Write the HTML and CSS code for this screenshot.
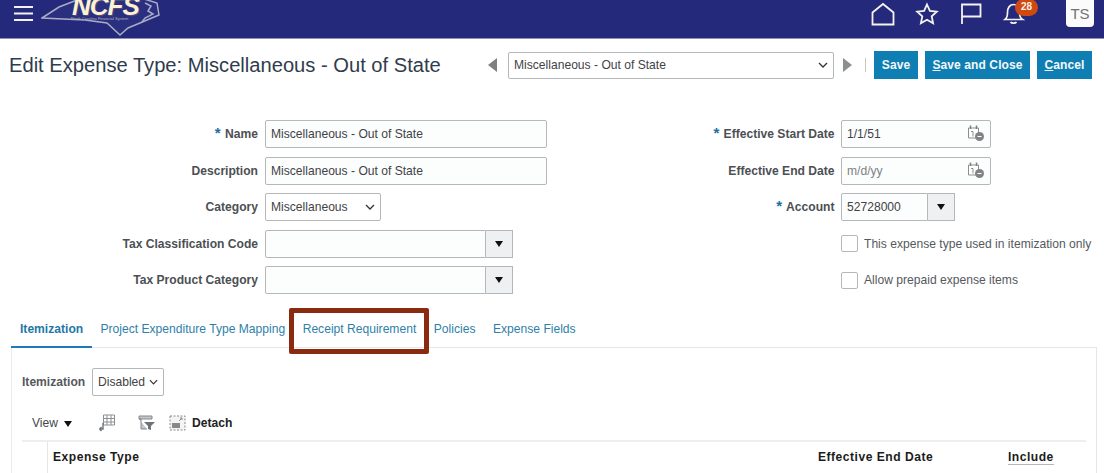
FILE: index.html
```html
<!DOCTYPE html>
<html lang="en">
<head>
<meta charset="utf-8">
<title>Edit Expense Type</title>
<link rel="stylesheet" href="styles.css">
</head>
<body>
<header class="topbar">
  <div class="brand">
    <svg class="burger" width="20" height="16" viewBox="0 0 20 16"><path d="M0 2h19M0 8.500h19M0 15h19" stroke="#f3f1ee" stroke-width="2"/></svg>
    <div class="logo">
      <svg class="map" width="122" height="38" viewBox="0 0 122 38"><path d="M1 18 L18 7 L36 0 L46 -2 L100 -2 L116 3 L118 15 L99 23 L87 28 L79 35 L66 23 L44 20 Z" fill="#2a2f80" stroke="#a9abc6" stroke-width="1.500"/><path d="M104 3l6 3-3 5 5 3-8 4-3 4" fill="none" stroke="#a9abc6" stroke-width="1.500"/></svg>
      <span class="logo-name">NCFS</span>
      <span class="logo-sub">North Carolina Financial System</span>
    </div>
  </div>
  <nav class="top-icons">
    <svg width="24" height="24" viewBox="0 0 24 24"><path d="M1.500 10.500 L12 2 L22.500 10.500 V22.500 H1.500 Z" fill="none" stroke="#f5f3ef" stroke-width="1.800"/></svg>
    <svg width="24" height="24" viewBox="0 0 24 24"><path d="M12 2.500l2.900 6.400 6.900.8-5.100 4.700 1.400 6.900-6.100-3.500-6.100 3.500 1.400-6.900-5.100-4.700 6.900-.8z" fill="none" stroke="#f5f3ef" stroke-width="1.800"/></svg>
    <svg width="24" height="24" viewBox="0 0 24 24"><path d="M3 23V3.500H21.500V15.500H3" fill="none" stroke="#f5f3ef" stroke-width="1.800"/></svg>
    <div class="bell">
      <svg width="22" height="24" viewBox="0 0 22 24"><path d="M2 18.500c2-1.500 2.500-3.500 2.500-7C4.500 6.500 7 3.500 10.500 3.500S16.500 6.500 16.500 11.500c0 3.500 .5 5.500 3 7zM7.500 21c1 1.500 5 1.500 6 0" fill="none" stroke="#f5f3ef" stroke-width="1.700"/></svg>
      <span class="badge">28</span>
    </div>
    <div class="avatar">TS</div>
  </nav>
</header>

<div class="title-row">
  <h1 class="page-title">Edit Expense Type: Miscellaneous - Out of State</h1>
  <div class="title-actions">
    <svg class="arrow" width="9" height="14" viewBox="0 0 9 14"><path d="M9 0V14L0 7Z" fill="#7d8184"/></svg>
    <div class="select nav-select"><span>Miscellaneous - Out of State</span><svg class="chev" width="10" height="6" viewBox="0 0 10 6"><path d="M1 1l4 4 4-4" fill="none" stroke="#333" stroke-width="1.300"/></svg></div>
    <svg class="arrow" width="9" height="14" viewBox="0 0 9 14"><path d="M0 0V14L9 7Z" fill="#8b8f91"/></svg>
    <span class="sep"></span>
    <div class="buttons">
      <button class="btn btn-save">Save</button>
      <button class="btn btn-close"><u>S</u>ave and Close</button>
      <button class="btn btn-cancel"><u>C</u>ancel</button>
    </div>
  </div>
</div>

<main class="form">
  <section class="col col-left">
    <label class="label"><i>*</i> Name</label>
    <input class="input w-282" value="Miscellaneous - Out of State">
    <label class="label">Description</label>
    <input class="input w-282" value="Miscellaneous - Out of State">
    <label class="label">Category</label>
    <div class="select cat-select"><span>Miscellaneous</span><svg class="chev" width="10" height="6" viewBox="0 0 10 6"><path d="M1 1l4 4 4-4" fill="none" stroke="#333" stroke-width="1.300"/></svg></div>
    <label class="label">Tax Classification Code</label>
    <div class="combo w-248"><input class="input"><span class="drop"><b></b></span></div>
    <label class="label">Tax Product Category</label>
    <div class="combo w-248"><input class="input"><span class="drop"><b></b></span></div>
  </section>
  <section class="col col-right">
    <label class="label"><i>*</i> Effective Start Date</label>
    <div class="date"><input class="input" value="1/1/51"><svg class="cal" width="18" height="17" viewBox="0 0 18 17"><path d="M1.500 3h10v10h-10z" fill="#fff" stroke="#8c8f91"/><path d="M3.500 .5v3.500M9.500 .5v3.500" stroke="#7d8184" stroke-width="1.500"/><path d="M4 6.500h2v5" fill="none" stroke="#8c8f91"/><circle cx="12.500" cy="11.500" r="4.500" fill="#7f8487"/><path d="M10.500 11.500h4" stroke="#fff"/></svg></div>
    <label class="label">Effective End Date</label>
    <div class="date"><input class="input" placeholder="m/d/yy"><svg class="cal" width="18" height="17" viewBox="0 0 18 17"><path d="M1.500 3h10v10h-10z" fill="#fff" stroke="#8c8f91"/><path d="M3.500 .5v3.500M9.500 .5v3.500" stroke="#7d8184" stroke-width="1.500"/><path d="M4 6.500h2v5" fill="none" stroke="#8c8f91"/><circle cx="12.500" cy="11.500" r="4.500" fill="#7f8487"/><path d="M10.500 11.500h4" stroke="#fff"/></svg></div>
    <label class="label"><i>*</i> Account</label>
    <div class="combo w-114"><input class="input" value="52728000"><span class="drop"><b></b></span></div>
    <span></span>
    <div class="check"><span class="box"></span>This expense type used in itemization only</div>
    <span></span>
    <div class="check"><span class="box"></span>Allow prepaid expense items</div>
  </section>
</main>

<div class="tabs">
  <a class="tab active">Itemization</a>
  <a class="tab">Project Expenditure Type Mapping</a>
  <a class="tab">Receipt Requirement</a>
  <a class="tab">Policies</a>
  <a class="tab">Expense Fields</a>
  <span class="highlight"></span>
</div>

<section class="panel">
  <div class="item-row">
    <span class="item-label">Itemization</span>
    <div class="select item-select"><span>Disabled</span><svg class="chev" width="9" height="6" viewBox="0 0 10 6"><path d="M1 1l4 4 4-4" fill="none" stroke="#333" stroke-width="1.300"/></svg></div>
  </div>
  <div class="toolbar">
    <span class="view">View</span><b class="tri"></b>
    <svg class="tool-a" width="17" height="18" viewBox="0 0 17 18"><path d="M5.500 1h11v10h-11zM5.500 4.500h11M5.500 8h11M9 1v10M13 1v10" fill="none" stroke="#8c8f91"/><path d="M5 9v6H1.500M1.500 15l2-2M1.500 15l2 2" fill="none" stroke="#6f7376" stroke-width="1.400"/></svg>
    <svg class="tool-b" width="17" height="16" viewBox="0 0 17 16"><path d="M1 1h13v3H1zM1 4h2v10h6" fill="#c4c6c8" stroke="#85898c"/><path d="M6 7h11l-4 4v4l-3-1v-3z" fill="#6f7376"/></svg>
    <svg class="tool-c" width="17" height="16" viewBox="0 0 17 16"><rect x="1" y="1" width="15" height="14" fill="#f4f4f4" stroke="#85898c" stroke-dasharray="2 1.500"/><rect x="3" y="8" width="8" height="5" fill="#85898c"/><path d="M10 6l3-3M11 3h2v2" fill="none" stroke="#85898c"/></svg>
    <span class="detach">Detach</span>
  </div>
  <div class="table-head">
    <span class="gutter"></span>
    <span class="th th-type">Expense Type</span>
    <span class="th th-end">Effective End Date</span>
    <span class="th th-inc">Include</span>
  </div>
</section>
</body>
</html>
```

FILE: styles.css
```css
* { box-sizing: border-box; }
html, body { margin: 0; height: 473px; overflow: hidden; }
body { background: #fff; font-family: "Liberation Sans", Arial, sans-serif; font-size: 12.1px; color: #3f4347; }

.topbar { height: 39px; background: #25297b; border-bottom: 1px solid #8d90bb; display: flex; justify-content: space-between; overflow: hidden; }
.brand { display: flex; align-items: flex-start; }
.burger { margin: 5px 0 0 14px; }
.logo { position: relative; width: 122px; height: 38px; margin-left: 7px; }
.map { display: block; }
.logo-name { position: absolute; left: 31px; top: -4px; font: italic bold 26px/21px "Liberation Sans", sans-serif; letter-spacing: -1px; color: #fdf1d4; text-shadow: 1px 1px 1px #55527a; }
.logo-sub { position: absolute; left: 30px; top: 17px; font-size: 4px; line-height: 4px; color: #b9b4b4; white-space: nowrap; }
.top-icons { display: flex; align-items: flex-start; }
.top-icons > svg:nth-child(1) { margin: 2px 0 0 0; }
.top-icons > svg:nth-child(2) { margin: 2px 0 0 20px; }
.top-icons > svg:nth-child(3) { margin: 1px 0 0 20px; }
.bell { position: relative; width: 22px; height: 24px; margin: 1px 0 0 20px; }
.badge { position: absolute; left: 12px; top: -2px; width: 23px; height: 17px; border-radius: 9px; background: #cf4a10; color: #fbeee4; font-size: 10px; font-weight: bold; line-height: 16px; text-align: center; }
.avatar { width: 28px; height: 27px; margin: 0 10px 0 41px; background: #fbfbfb; border-radius: 0 0 4px 4px; color: #6f7478; font-size: 15px; line-height: 27px; text-align: center; }

.title-row { height: 52px; padding: 12px 12px 0 9px; display: flex; justify-content: space-between; align-items: flex-start; }
.page-title { margin: 0; font-size: 20.15px; font-weight: normal; line-height: 28px; color: #2f3c4d; }
.title-actions { display: flex; align-items: center; height: 28px; }
.arrow { display: block; }
.select { display: flex; align-items: center; justify-content: space-between; background: #fff; border: 1px solid #b4b8bb; border-radius: 2px; color: #3f4347; font-size: 12.1px; }
.nav-select { width: 326px; height: 27px; margin: 0 9px 0 11px; padding: 0 5px; }
.sep { width: 1px; height: 14px; margin: 0 8px 0 13px; background: #c8c6b8; }
.buttons { display: flex; gap: 7px; }
.btn { height: 28px; padding: 0 0 1px; border: 0; background: #0f7fb3; color: #f4f8fa; font: bold 12px "Liberation Sans", sans-serif; letter-spacing: .1px; }
.btn-save { width: 44px; }
.btn-close { width: 105px; }
.btn-cancel { width: 55px; }

.form { height: 218px; padding-top: 29px; display: flex; }
.col { display: grid; grid-auto-rows: 28px; row-gap: 8.500px; align-items: center; align-content: start; }
.col-left { width: 547px; grid-template-columns: 258px auto; column-gap: 7px; }
.col-right { grid-template-columns: 287.500px auto; column-gap: 6.500px; }
.label { justify-self: end; font-weight: bold; color: #4c5054; white-space: nowrap; }
.label i { color: #1b6ca8; font-style: normal; font-size: 15px; line-height: 12px; margin-right: 1px; }
.input { display: block; width: 100%; height: 28px; padding: 0 5px; border: 1px solid #b4b8bb; border-radius: 2px; background: #fcfdfd; color: #3f4347; font: 12.1px "Liberation Sans", sans-serif; outline: 0; }
.input::placeholder { color: #7d8184; opacity: 1; }
.w-282 { width: 282px; }
.cat-select { width: 116px; height: 28px; padding: 0 5px; }
.combo { display: flex; height: 28px; }
.combo .input { flex: 1; min-width: 0; border-radius: 2px 0 0 2px; }
.w-248 { width: 248px; }
.w-114 { width: 114px; }
.drop { width: 27px; border: 1px solid #b4b8bb; border-left: 0; background: #eef0f1; display: flex; align-items: center; justify-content: center; }
.drop b { width: 0; height: 0; border: 4.500px solid transparent; border-top: 6px solid #111; border-bottom: 0; }
.date { position: relative; width: 150px; }
.cal { position: absolute; right: 6px; top: 5px; }
.check { display: flex; align-items: center; color: #55595d; white-space: nowrap; }
.box { width: 17px; height: 17px; margin-right: 6px; background: #fff; border: 1px solid #b4b8bb; border-radius: 2px; }

.tabs { position: relative; height: 39px; margin: 0 7px 0 11px; display: flex; border-bottom: 1px solid #e4e6e8; }
.tab { height: 39px; padding-top: 13px; color: #2f7fa8; line-height: 14px; white-space: nowrap; margin-left: 8.500px; margin-right: 9px; }
.tab.active { margin: 0; padding: 13px 9px 0; color: #1f78a8; font-weight: bold; border-bottom: 2px solid #1b7cb8; width: 81px; }
.highlight { position: absolute; left: 278px; top: -1px; width: 140px; height: 46px; border: 5px solid #8a2a0e; border-radius: 2px; }

.panel { height: 126px; margin: 0 7px 0 11px; padding: 20px 10px 0; border-left: 1px solid #e9ebec; border-right: 1px solid #e4e6e8; }
.item-row { display: flex; align-items: center; height: 28px; }
.item-label { font-weight: bold; color: #55595d; width: 70px; white-space: nowrap; }
.item-select { width: 72px; height: 28px; padding: 0 5px; }
.toolbar { display: flex; align-items: center; height: 28px; margin-top: 13px; padding-left: 10px; }
.view { color: #44484c; }
.tri { width: 0; height: 0; margin: 1px 0 0 6px; border: 4.500px solid transparent; border-top: 6px solid #111; border-bottom: 0; }
.tool-a { margin-left: 26px; }
.tool-b { margin-left: 23px; }
.tool-c { margin-left: 14px; }
.detach { margin-left: 6px; font-weight: bold; color: #222; }
.table-head { display: flex; height: 34px; margin-top: 3px; border-top: 2px solid #eceeef; width: 1064px; }
.gutter { width: 26px; border-right: 1px solid #e4e6e8; flex: none; }
.th { font-weight: bold; color: #1c1c1c; letter-spacing: .5px; line-height: 14px; padding-top: 8px; white-space: nowrap; }
.th-type { width: 770px; padding-left: 5px; flex: none; }
.th-end { width: 190px; flex: none; }
.th-inc { height: 23px; border-bottom: 1px solid #b4b8bb; }
```
